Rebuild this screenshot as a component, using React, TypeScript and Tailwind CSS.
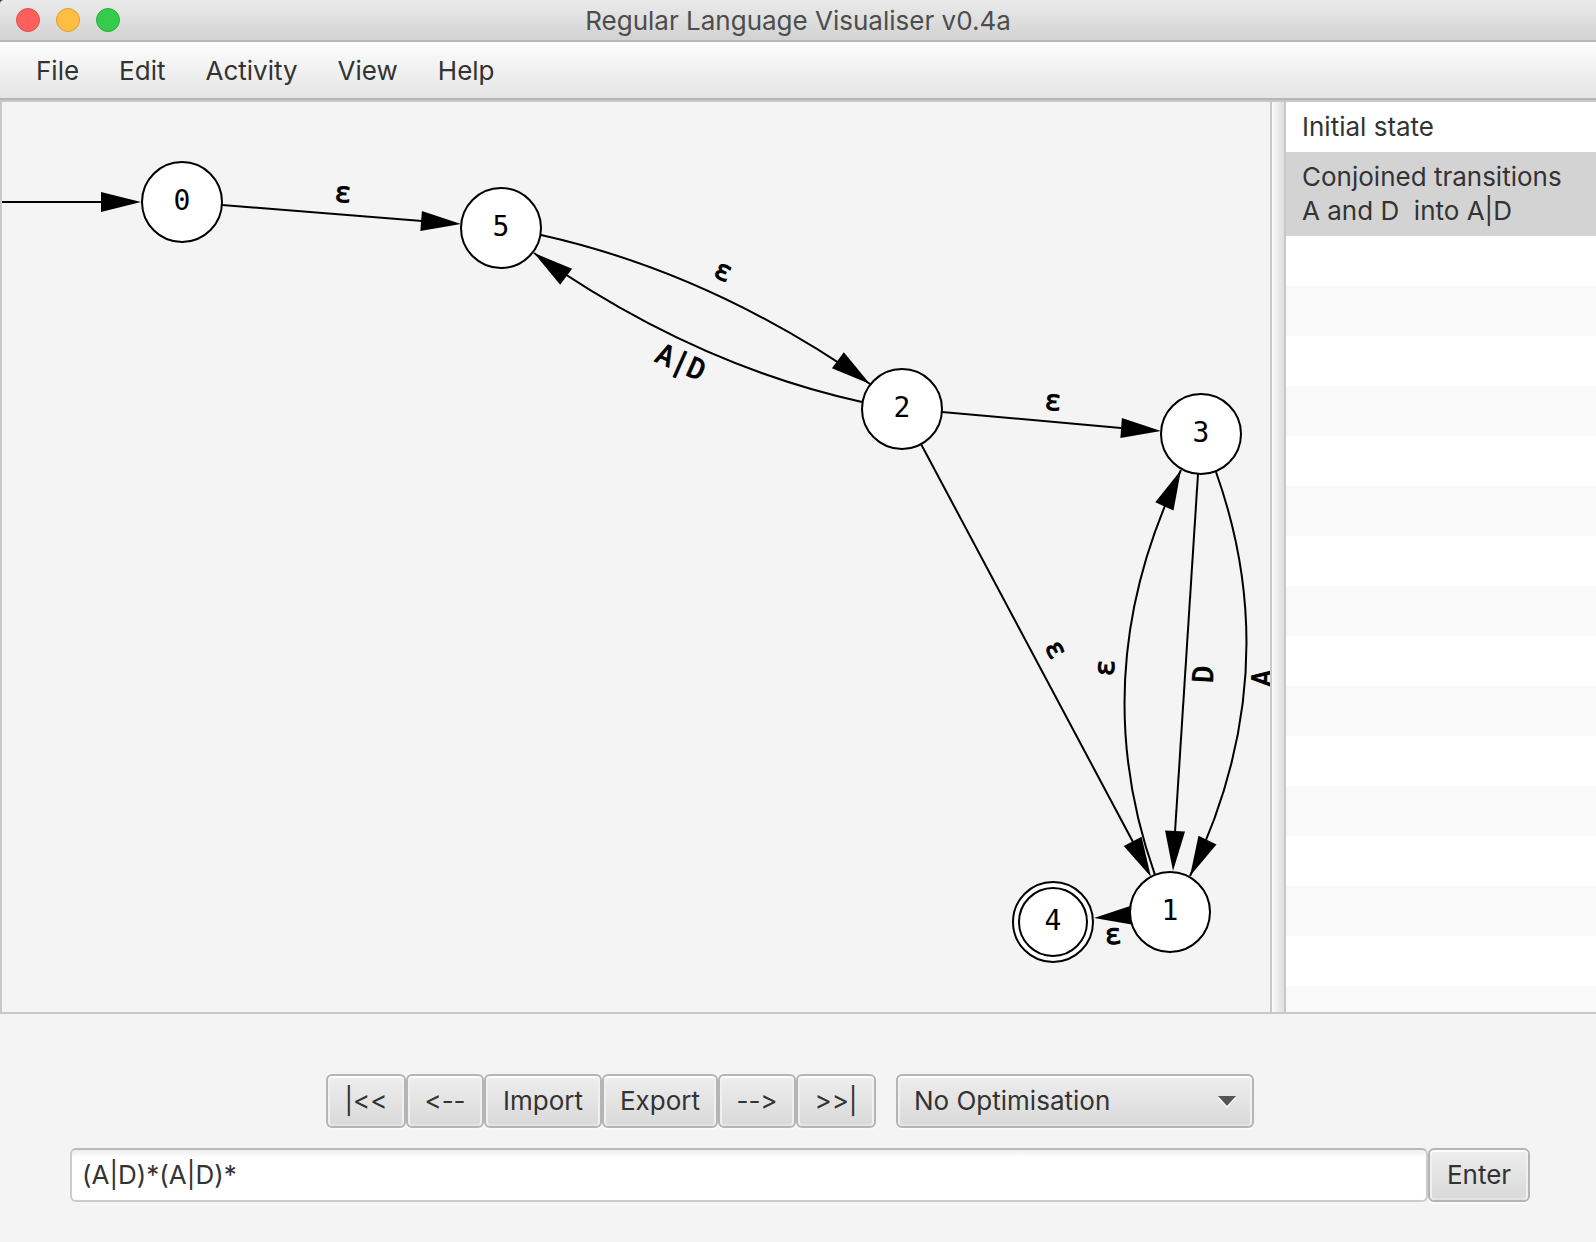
import { useState } from "react";

type Point = [number, number];

type StateNode = { id: string; x: number; y: number; accepting?: boolean };

type Transition = {
  from: Point;
  to: Point;
  control?: Point;
  /** Centre of the arrow head's flat side. */
  base: Point;
  label?: string;
  labelAt?: Point;
  angle?: number;
};

const nodes: StateNode[] = [
  { id: "0", x: 182, y: 202 },
  { id: "5", x: 501, y: 228 },
  { id: "2", x: 902, y: 409 },
  { id: "3", x: 1201, y: 434 },
  { id: "1", x: 1170, y: 912 },
  { id: "4", x: 1053, y: 922, accepting: true },
];

const transitions: Transition[] = [
  { from: [0, 202], to: [141, 202], base: [102, 202] },
  { from: [222, 205], to: [461, 224], base: [422, 221], label: "ε", labelAt: [343, 194], angle: 4 },
  { from: [541, 235], control: [712, 273], to: [870, 384], base: [839, 361], label: "ε", labelAt: [723, 272], angle: 24 },
  { from: [862, 402], control: [691, 364], to: [534, 253], base: [565, 276], label: "A|D", labelAt: [681, 362], angle: 24 },
  { from: [942, 412], to: [1161, 431], base: [1121, 428], label: "ε", labelAt: [1053, 402], angle: 4 },
  { from: [921, 444], to: [1151, 877], base: [1133, 842], label: "ε", labelAt: [1055, 650], angle: 62 },
  { from: [1155, 875], control: [1083, 672], to: [1181, 470], base: [1165, 505], label: "ε", labelAt: [1106, 668], angle: -87 },
  { from: [1198, 474], to: [1173, 871], base: [1175, 832], label: "D", labelAt: [1203, 674], angle: -87 },
  { from: [1216, 472], control: [1288, 674], to: [1190, 876], base: [1207, 841], label: "A", labelAt: [1262, 678], angle: -87 },
  { from: [1130, 915], to: [1094, 918], base: [1133, 915], label: "ε", labelAt: [1113, 936], angle: -4 },
];

function TransitionEdge({ edge }: { edge: Transition }) {
  const { from, to, base, control, label, labelAt, angle = 0 } = edge;
  const heading = (Math.atan2(to[1] - base[1], to[0] - base[0]) * 180) / Math.PI;
  const d = control
    ? `M${from[0]} ${from[1]} Q${control[0]} ${control[1]} ${to[0]} ${to[1]}`
    : `M${from[0]} ${from[1]} L${base[0]} ${base[1]}`;
  return (
    <g>
      <path d={d} fill="none" stroke="black" strokeWidth="2" />
      <path d="M0 0 L-40 -10 V10 Z" transform={`translate(${to[0]} ${to[1]}) rotate(${heading})`} />
      {label && labelAt && (
        <text
          transform={`translate(${labelAt[0]} ${labelAt[1]}) rotate(${angle})`}
          y={label === "ε" ? 8 : 10}
          textAnchor="middle"
          stroke="black"
          strokeWidth="1"
        >
          {label}
        </text>
      )}
    </g>
  );
}

function Automaton() {
  return (
    <svg
      role="img"
      aria-label="Automaton"
      className="min-w-0 flex-1 font-['DejaVu_Sans_Mono',monospace] text-[28px]"
    >
      <g transform="translate(-2 -102)">
        {transitions.map((edge, i) => (
          <TransitionEdge key={i} edge={edge} />
        ))}
        {nodes.map((n) => (
          <g key={n.id}>
            <circle cx={n.x} cy={n.y} r="40" fill="white" stroke="black" strokeWidth="2" />
            {n.accepting && <circle cx={n.x} cy={n.y} r="34" fill="white" stroke="black" strokeWidth="2" />}
            <text x={n.x} y={n.y + 8} textAnchor="middle">
              {n.id}
            </text>
          </g>
        ))}
      </g>
    </svg>
  );
}

const control =
  "h-[54px] rounded-md border-2 border-[#b5b5b5] bg-linear-to-b from-[#eeeeee] to-[#d9d9d9] shadow-[inset_0_2px_0_#fdfdfd,inset_2px_0_0_#f0f0f0,inset_-2px_0_0_#f0f0f0,inset_0_-2px_0_#e3e3e3,0_2px_0_#fafafa]";

const buttons = [
  { label: "|<<", width: "w-20" },
  { label: "<--", width: "w-[78px]" },
  { label: "Import", width: "w-[118px]" },
  { label: "Export", width: "w-[116px]" },
  { label: "-->", width: "w-[78px]" },
  { label: ">>|", width: "w-20" },
];

export default function App() {
  const [regex, setRegex] = useState("(A|D)*(A|D)*");
  const [selected, setSelected] = useState(1);
  const history = ["Initial state", "Conjoined transitions\nA and D  into A|D"];

  return (
    <div className="flex min-h-screen flex-col bg-[#f4f4f4] font-[Inter,sans-serif] text-[26px] text-[#333333] [font-feature-settings:'calt'_0]">
      <div className="bg-[#333333]">
        <header className="grid h-[42px] grid-cols-[1fr_auto_1fr] items-center rounded-tl-sm border-b-2 border-[#b9b9b9] bg-linear-to-b from-[#ebebeb] to-[#d2d2d2] px-4">
          <div className="flex gap-4">
            <button aria-label="Close" className="size-6 rounded-full border border-[#e2504c] bg-[#fc605c]" />
            <button aria-label="Minimise" className="size-6 rounded-full border border-[#e0a030] bg-[#fdbe41]" />
            <button aria-label="Zoom" className="size-6 rounded-full border border-[#2bae3c] bg-[#35cb4b]" />
          </div>
          <h1 className="pt-0.5 leading-8 text-[#4d4d4d]">Regular Language Visualiser v0.4a</h1>
        </header>
      </div>

      <nav className="flex h-[58px] items-center border-b-2 border-[#b5b5b5] bg-linear-to-b from-[#fdfdfd] to-[#e5e5e5] px-4 pt-0.5">
        {["File", "Edit", "Activity", "View", "Help"].map((item) => (
          <button key={item} className="px-5 leading-8">
            {item}
          </button>
        ))}
      </nav>

      <main className="flex min-h-[600px] flex-1 border-y-2 border-l-2 border-[#c8c8c8]">
        <Automaton />
        <div className="w-4 border-x-2 border-[#c8c8c8] bg-linear-to-r from-[#fbfbfb] to-[#dedede]" />
        <aside className="flex w-[310px] flex-col bg-white">
          {history.map((entry, i) => (
            <button
              key={entry}
              onClick={() => setSelected(i)}
              className={`px-4 py-2 text-left leading-[34px] whitespace-pre ${i === selected ? "bg-[#d3d3d3]" : "bg-white"}`}
            >
              {entry}
            </button>
          ))}
          <div className="flex-1 bg-[repeating-linear-gradient(#ffffff_0_50px,#f9f9f9_50px_100px)]" />
        </aside>
      </main>

      <footer className="flex flex-col gap-5 pt-[60px] pb-10">
        <div className="flex justify-center gap-5 pr-4">
          <div className="flex">
            {buttons.map((b) => (
              <button key={b.label} className={`${control} pb-0.5 ${b.width}`}>
                {b.label}
              </button>
            ))}
          </div>
          <div className="relative w-[358px]">
            <select aria-label="Optimisation" className={`${control} w-full appearance-none pr-12 pb-0.5 pl-4`}>
              <option>No Optimisation</option>
            </select>
            <svg viewBox="0 0 18 12" className="pointer-events-none absolute top-[22px] right-[18px] h-3 w-[18px]">
              <path d="M0 2 H18 L9 12 Z" fill="white" />
              <path d="M0 0 H18 L9 10 Z" fill="#555555" />
            </svg>
          </div>
        </div>
        <form className="flex pr-[66px] pl-[70px]" onSubmit={(e) => e.preventDefault()}>
          <input
            aria-label="Regular expression"
            value={regex}
            onChange={(e) => setRegex(e.target.value)}
            className="h-[54px] min-w-0 flex-1 rounded-md border-2 border-[#cbcbcb] border-t-[#b9b9b9] bg-linear-to-b from-[#eeeeee] to-white to-[8px] px-2.5 pb-0.5"
          />
          <button className={`${control} w-[102px] pb-0.5`}>Enter</button>
        </form>
      </footer>
    </div>
  );
}
